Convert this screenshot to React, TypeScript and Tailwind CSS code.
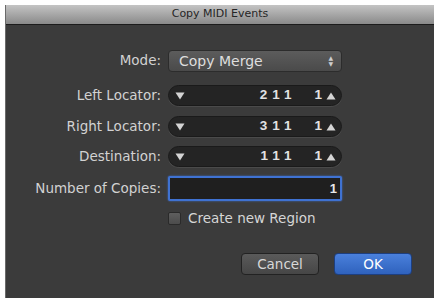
const font = { fontFamily: '"DejaVu Sans", Verdana, sans-serif' };

function Label({ children }: { children: React.ReactNode }) {
  return <div className="text-right text-[13.5px] text-[#d2d2d2] leading-none">{children}</div>;
}

function Tri({ up }: { up?: boolean }) {
  return (
    <svg width="10" height="8" viewBox="0 0 10 8" className="shrink-0">
      <path d={up ? "M5 0.5 L9.5 7.5 L0.5 7.5 Z" : "M0.5 0.5 L9.5 0.5 L5 7.5 Z"} fill="#d4d4d4" />
    </svg>
  );
}

function Stepper({ bars, unit }: { bars: string; unit: string }) {
  return (
    <div
      className="h-[21px] rounded-full bg-[#242424] border border-[#1a1a1a] shadow-[0_1px_0_#4a4a4a] flex items-center pl-[6px] pr-[5px] text-[#e2e2e2] text-[13.5px] font-bold"
      style={{ fontFamily: '"Liberation Sans", Arial, sans-serif' }}
    >
      <Tri />
      <span className="ml-auto tracking-[5px]">{bars}</span>
      <span className="ml-[18px]">{unit}</span>
      <span className="ml-[4px]">
        <Tri up />
      </span>
    </div>
  );
}

export default function App() {
  return (
    <div className="w-[434px] h-[298px] bg-white pt-[5px] pl-[5px] overflow-hidden" style={font}>
      <div className="w-[429px] h-[293px] flex flex-col bg-[#3b3b3b] border-l border-[#6a6a6a]">
        <div className="h-[19px] bg-gradient-to-b from-[#c4c4c4] to-[#8a8a8a] flex items-center justify-center text-[11px] text-[#262626]">
          Copy MIDI Events
        </div>
        <div className="h-[1px] bg-[#1c1c1c]" />
        <div className="grid grid-cols-[155px_174px] gap-x-[7px] items-center pt-[25px]">
          <Label>Mode:</Label>
          <div className="h-[22px] rounded-[4px] bg-gradient-to-b from-[#5c5c5c] to-[#4a4a4a] border border-[#2c2c2c] flex items-center pl-[10px] pr-[8px] text-[14px] text-[#dedede]">
            Copy Merge
            <span className="ml-auto flex flex-col items-center leading-none text-[6px] text-[#cfcfcf]">
              <span>▲</span>
              <span>▼</span>
            </span>
          </div>

          <div className="h-[13px] col-span-2" />
          <Label>Left Locator:</Label>
          <Stepper bars="211" unit="1" />

          <div className="h-[10px] col-span-2" />
          <Label>Right Locator:</Label>
          <Stepper bars="311" unit="1" />

          <div className="h-[9px] col-span-2" />
          <Label>Destination:</Label>
          <Stepper bars="111" unit="1" />

          <div className="h-[9px] col-span-2" />
          <Label>Number of Copies:</Label>
          <div
            className="h-[25px] bg-[#1f1f1f] border-[2px] border-[#3f72d2] rounded-[2px] shadow-[0_0_2px_#3f72d2] flex items-center justify-end pr-[3px] text-[13px] font-bold text-[#e8e8e8]"
            style={{ fontFamily: '"Liberation Sans", Arial, sans-serif' }}
          >
            1
          </div>

          <div className="h-[7px] col-span-2" />
          <div />
          <div className="flex items-center gap-[7px] pl-0">
            <div className="w-[13px] h-[13px] rounded-[2px] bg-gradient-to-b from-[#5e5e5e] to-[#4c4c4c] border border-[#2a2a2a]" />
            <span className="text-[13.5px] text-[#d6d6d6]">Create new Region</span>
          </div>
        </div>
        <div className="flex justify-end gap-[15px] pr-[22px] mt-[25px]">
          <div className="w-[78px] h-[22px] rounded-[4px] bg-gradient-to-b from-[#5a5a5a] to-[#464646] border border-[#222] flex items-center justify-center text-[13.5px] text-[#d8d8d8]">
            Cancel
          </div>
          <div className="w-[78px] h-[22px] rounded-[4px] bg-gradient-to-b from-[#4a80dc] to-[#2f62bd] border border-[#1d3f80] flex items-center justify-center text-[13.5px] text-white">
            OK
          </div>
        </div>
      </div>
    </div>
  );
}
